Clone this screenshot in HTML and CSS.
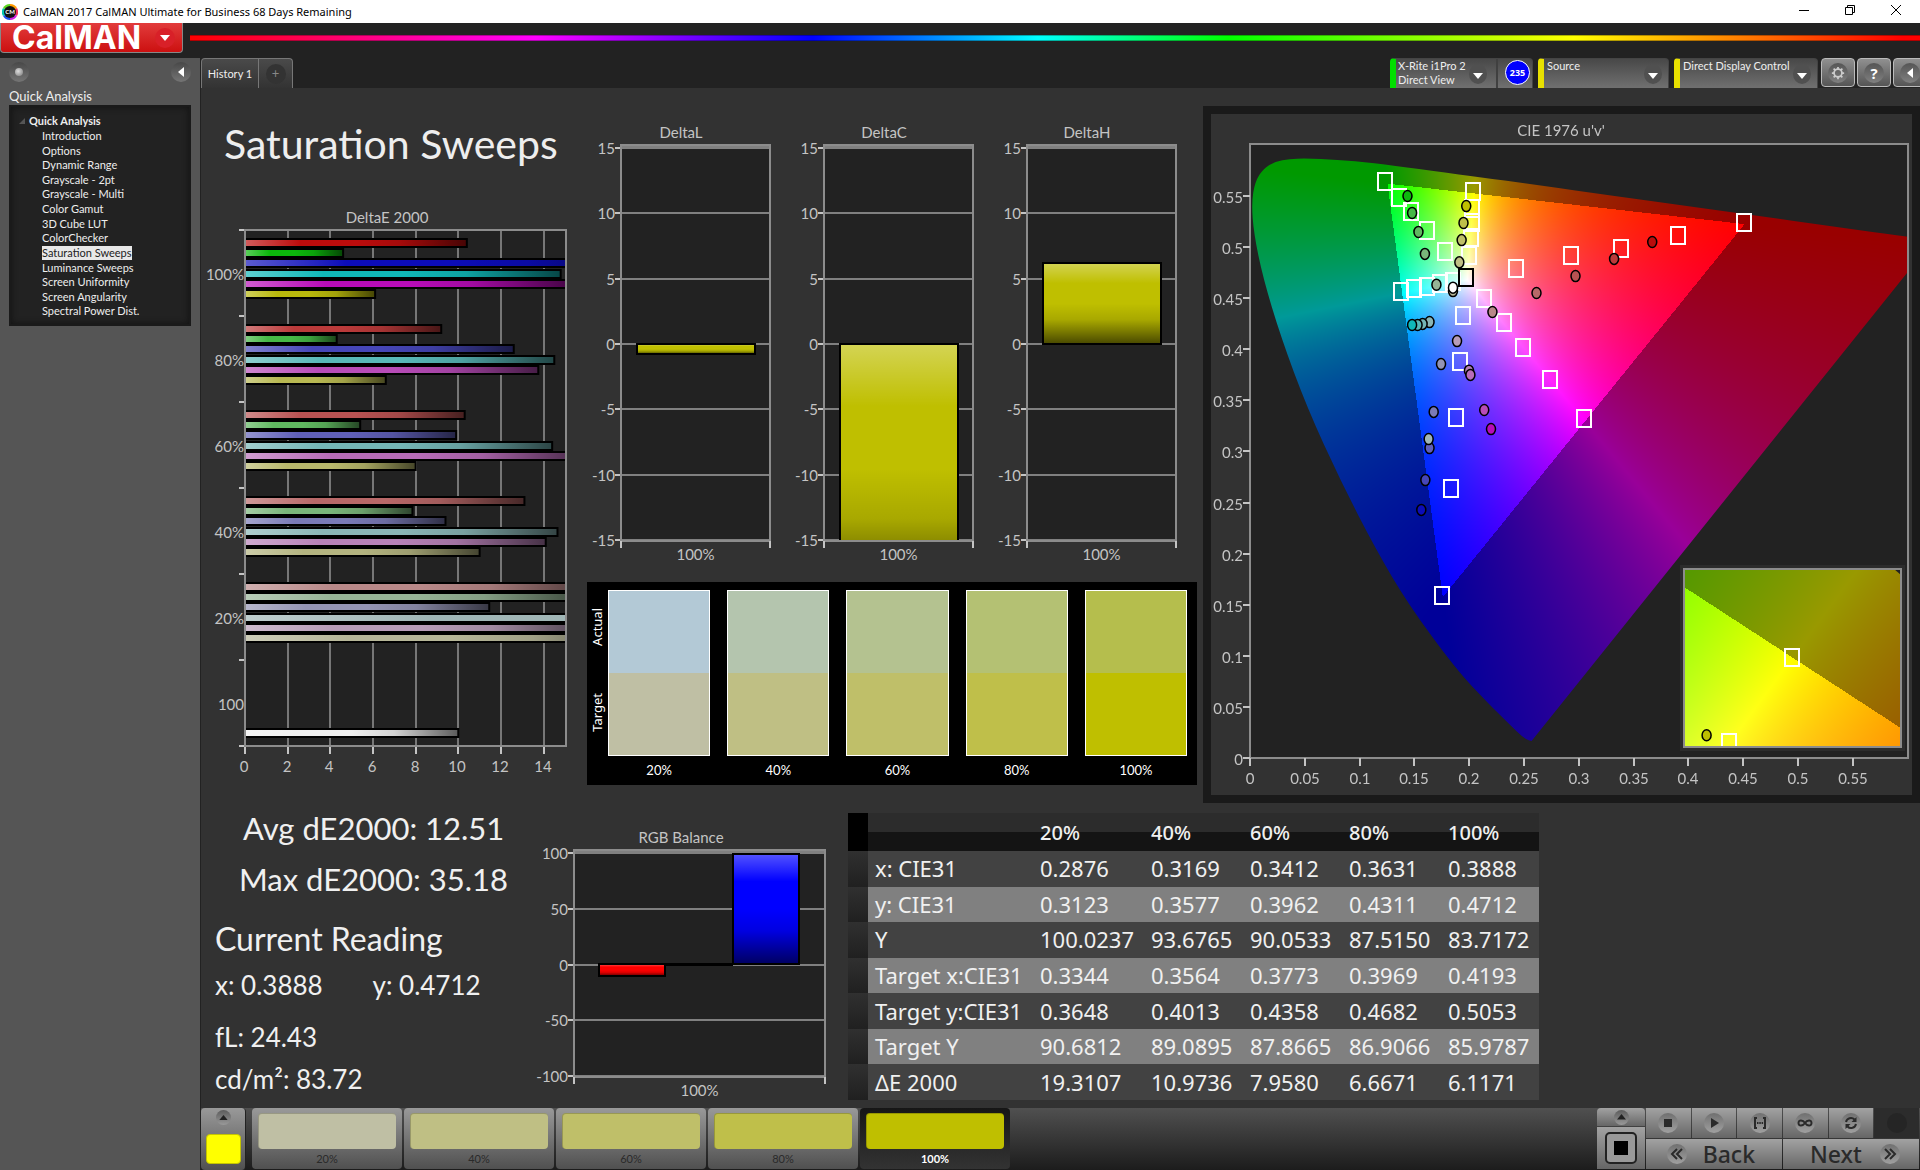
FILE: index.html
```html
<!DOCTYPE html>
<html lang="en">
<head>
<meta charset="utf-8">
<meta name="viewport" content="width=device-width, initial-scale=1">
<title>CalMAN 2017 CalMAN Ultimate for Business 68 Days Remaining</title>
<link rel="stylesheet" href="styles.css">
</head>
<body>
<header class="titlebar">
  <svg class="app-icon" viewBox="0 0 16 16" aria-hidden="true">
    <path d="M8 8V0a8 8 0 0 1 7 4z" fill="#ff9a00"/><path d="M8 8l7-4a8 8 0 0 1 0 8z" fill="#f03060"/>
    <path d="M8 8l7 4a8 8 0 0 1-7 4z" fill="#d020e0"/><path d="M8 8v8a8 8 0 0 1-7-4z" fill="#2050f0"/>
    <path d="M8 8l-7 4a8 8 0 0 1 0-8z" fill="#00c8b0"/><path d="M8 8L1 4a8 8 0 0 1 7-4z" fill="#60d820"/>
    <circle cx="8" cy="8" r="6" fill="#111"/>
    <text x="8" y="10" class="app-icon-text" text-anchor="middle">CM</text>
  </svg>
  <span class="titlebar-text">CalMAN 2017 CalMAN Ultimate for Business 68 Days Remaining</span>
  <div class="window-buttons">
    <button type="button" aria-label="Minimize"><svg viewBox="0 0 12 12"><path d="M1 6.500h10"/></svg></button>
    <button type="button" aria-label="Restore"><svg viewBox="0 0 12 12"><path d="M1.500 3.500h7v7h-7zM3.500 3.500v-2h7v7h-2"/></svg></button>
    <button type="button" aria-label="Close"><svg viewBox="0 0 12 12"><path d="M1 1l10 10M11 1L1 11"/></svg></button>
  </div>
</header>

<div class="brandbar">
  <button type="button" class="brand"><span>CalMAN</span>
    <i class="brand-drop"><svg viewBox="0 0 10 6"><path d="M0 0h10L5 6z"/></svg></i></button>
  <div class="rainbow"></div>
</div>

<div class="workspace">
  <aside class="sidebar">
    <div class="sidebar-tools">
      <button type="button" class="round" aria-label="Pin"><i class="pin-dot"></i></button>
      <button type="button" class="round" aria-label="Collapse"><svg viewBox="0 0 6 10"><path d="M6 0v10L0 5z"/></svg></button>
    </div>
    <h2>Quick Analysis</h2>
    <nav class="tree">
      <div class="tree-root"><svg viewBox="0 0 5 5"><path d="M5 0v5H0z"/></svg><span>Quick Analysis</span></div>
      <ul>
        <li><a href="#">Introduction</a></li>
        <li><a href="#">Options</a></li>
        <li><a href="#">Dynamic Range</a></li>
        <li><a href="#">Grayscale - 2pt</a></li>
        <li><a href="#">Grayscale - Multi</a></li>
        <li><a href="#">Color Gamut</a></li>
        <li><a href="#">3D Cube LUT</a></li>
        <li><a href="#">ColorChecker</a></li>
        <li><a href="#" class="current">Saturation Sweeps</a></li>
        <li><a href="#">Luminance Sweeps</a></li>
        <li><a href="#">Screen Uniformity</a></li>
        <li><a href="#">Screen Angularity</a></li>
        <li><a href="#">Spectral Power Dist.</a></li>
      </ul>
    </nav>
  </aside>

  <main class="content">
    <div class="tabstrip">
      <button type="button" class="tab">History 1</button>
      <button type="button" class="tab tab-add" aria-label="Add history"><i>+</i></button>
      <div class="devices">
        <div class="device device-meter">
          <button type="button" class="device-main"><span>X-Rite i1Pro 2<br>Direct View</span>
            <i class="drop"><svg viewBox="0 0 10 6"><path d="M0 0h10L5 6z"/></svg></i></button>
          <button type="button" class="level">235</button>
        </div>
        <button type="button" class="device device-source"><span>Source</span>
          <i class="drop"><svg viewBox="0 0 10 6"><path d="M0 0h10L5 6z"/></svg></i></button>
        <button type="button" class="device device-display"><span>Direct Display Control</span>
          <i class="drop"><svg viewBox="0 0 10 6"><path d="M0 0h10L5 6z"/></svg></i></button>
        <button type="button" class="tool" aria-label="Settings"><i><svg class="gear" viewBox="0 0 16 16"><circle cx="8" cy="8" r="4.500"/><path d="M8 1v2.500M8 12.500V15M1 8h2.500M12.500 8H15M3 3l2 2M11 11l2 2M13 3l-2 2M5 11l-2 2"/></svg></i></button>
        <button type="button" class="tool" aria-label="Help"><i>?</i></button>
        <button type="button" class="tool" aria-label="Hide"><i><svg class="left" viewBox="0 0 6 10"><path d="M6 0v10L0 5z"/></svg></i></button>
      </div>
    </div>

    <section class="upper">
      <div class="col-sweep">
        <h1>Saturation Sweeps</h1>
        <svg id="delta-e" class="chart" viewBox="0 0 385 590"></svg>
      </div>
      <div class="col-delta">
        <div class="deltas">
          <svg id="delta-l" class="chart" viewBox="0 0 203 456"></svg>
          <svg id="delta-c" class="chart" viewBox="0 0 203 456"></svg>
          <svg id="delta-h" class="chart" viewBox="0 0 203 456"></svg>
        </div>
        <div class="compare">
          <div class="compare-labels"><span>Actual</span><span>Target</span></div>
          <figure><div class="pair p20"></div><figcaption>20%</figcaption></figure>
          <figure><div class="pair p40"></div><figcaption>40%</figcaption></figure>
          <figure><div class="pair p60"></div><figcaption>60%</figcaption></figure>
          <figure><div class="pair p80"></div><figcaption>80%</figcaption></figure>
          <figure><div class="pair p100"></div><figcaption>100%</figcaption></figure>
        </div>
      </div>
      <div class="cie">
        <canvas id="cie-fill" width="701" height="681"></canvas>
        <svg id="cie-marks" class="chart" viewBox="0 0 701 681"></svg>
      </div>
    </section>

    <section class="lower">
      <div class="readings">
        <p class="stat avg">Avg dE2000: 12.51</p>
        <p class="stat max">Max dE2000: 35.18</p>
        <h3>Current Reading</h3>
        <p class="xy"><span>x: 0.3888</span><span>y: 0.4712</span></p>
        <p class="fl">fL: 24.43</p>
        <p class="cd">cd/m²: 83.72</p>
      </div>
      <svg id="rgb" class="chart" viewBox="0 0 318 305"></svg>
      <table>
        <thead><tr><th class="grip"></th><th></th><th>20%</th><th>40%</th><th>60%</th><th>80%</th><th>100%</th></tr></thead>
        <tbody>
          <tr><td class="grip"></td><th>x: CIE31</th><td>0.2876</td><td>0.3169</td><td>0.3412</td><td>0.3631</td><td>0.3888</td></tr>
          <tr><td class="grip"></td><th>y: CIE31</th><td>0.3123</td><td>0.3577</td><td>0.3962</td><td>0.4311</td><td>0.4712</td></tr>
          <tr><td class="grip"></td><th>Y</th><td>100.0237</td><td>93.6765</td><td>90.0533</td><td>87.5150</td><td>83.7172</td></tr>
          <tr><td class="grip"></td><th>Target x:CIE31</th><td>0.3344</td><td>0.3564</td><td>0.3773</td><td>0.3969</td><td>0.4193</td></tr>
          <tr><td class="grip"></td><th>Target y:CIE31</th><td>0.3648</td><td>0.4013</td><td>0.4358</td><td>0.4682</td><td>0.5053</td></tr>
          <tr><td class="grip"></td><th>Target Y</th><td>90.6812</td><td>89.0895</td><td>87.8665</td><td>86.9066</td><td>85.9787</td></tr>
          <tr><td class="grip"></td><th>ΔE 2000</th><td>19.3107</td><td>10.9736</td><td>7.9580</td><td>6.6671</td><td>6.1171</td></tr>
        </tbody>
      </table>
    </section>

    <footer class="bottombar">
      <button type="button" class="picker" aria-label="Color"><i><svg viewBox="0 0 10 6"><path d="M5 0l5 6H0z"/></svg></i><b></b></button>
      <div class="steps">
        <button type="button" class="s20"><b></b>20%</button>
        <button type="button" class="s40"><b></b>40%</button>
        <button type="button" class="s60"><b></b>60%</button>
        <button type="button" class="s80"><b></b>80%</button>
        <button type="button" class="s100 selected"><b></b>100%</button>
      </div>
      <div class="transport">
        <div class="stopcol">
          <button type="button" class="up" aria-label="Expand"><i><svg viewBox="0 0 10 6"><path d="M5 0l5 6H0z"/></svg></i></button>
          <button type="button" class="bigstop" aria-label="Stop"><b></b></button>
        </div>
        <div class="keys">
          <button type="button" aria-label="Stop"><i><svg viewBox="0 0 16 16"><path d="M4 4h8v8H4z"/></svg></i></button>
          <button type="button" aria-label="Play"><i><svg viewBox="0 0 16 16"><path d="M5 3l8 5-8 5z"/></svg></i></button>
          <button type="button" aria-label="Read series"><i><svg viewBox="0 0 16 16"><path class="line" d="M5 3H3v10h2M11 3h2v10h-2"/><path d="M5 7h1.500v2H5zM7.300 7h1.500v2H7.300zM9.600 7h1.500v2H9.600z"/></svg></i></button>
          <button type="button" aria-label="Continuous"><i><svg viewBox="0 0 16 16"><path class="line" d="M8 8C6 5 1.500 4.500 1.500 8S6 11 8 8s6.500-3.500 6.500 0S10 11 8 8z"/></svg></i></button>
          <button type="button" aria-label="Repeat"><i><svg viewBox="0 0 16 16"><path class="line" d="M3 7a5 5 0 0 1 8.500-2.500M13 9a5 5 0 0 1-8.500 2.500"/><path d="M13.500 2v5h-5zM2.500 14V9h5z"/></svg></i></button>
          <button type="button" class="off" aria-label="Record" disabled><i></i></button>
          <button type="button" class="wide back"><i><svg viewBox="0 0 16 16"><path class="line" d="M8 3L3 8l5 5M13 3L8 8l5 5"/></svg></i><span>Back</span></button>
          <button type="button" class="wide next"><span>Next</span><i><svg viewBox="0 0 16 16"><path class="line" d="M3 3l5 5-5 5M8 3l5 5-5 5"/></svg></i></button>
        </div>
      </div>
    </footer>
  </main>
</div>
<script src="charts.js"></script>
</body>
</html>
```
FILE: styles.css
```css
:root {
  --ui: Lato, "Open Sans", sans-serif;
  --data: "Noto Sans", "Open Sans", sans-serif;
}
* { box-sizing: border-box; }
body { margin: 0; min-height: 100vh; display: flex; flex-direction: column; background: #222; color: #eee; font: 12px/15px var(--ui); }
button { font: inherit; color: inherit; border: 0; padding: 0; background: none; }
h1, h2, h3, p, ul, figure { margin: 0; padding: 0; font-weight: 400; }
i, b { font-style: normal; display: block; }
svg { display: block; }

.titlebar { height: 23px; background: #fff; color: #000; display: flex; align-items: center; padding-left: 2px; font: 11px/16px "Noto Sans", sans-serif; }
.app-icon { width: 16px; height: 16px; margin-right: 5px; }
.app-icon-text { font: bold 6px Lato, sans-serif; fill: #fff; }
.window-buttons { margin-left: auto; display: flex; }
.window-buttons button { width: 46px; height: 23px; display: grid; place-items: center; padding: 0 3px 3px 0; }
.window-buttons svg { width: 12px; height: 12px; fill: none; stroke: #000; }

.brandbar { height: 35px; display: flex; align-items: flex-start; gap: 7px; }
.brand { width: 183px; height: 30px; display: flex; align-items: center; justify-content: space-between; padding: 0 7px 0 11px; background: linear-gradient(#e23c3c, #cc1010); border: 1px solid #888; border-top: 0; border-radius: 0 0 4px 4px; font: bold 32px/29px Inter, sans-serif; color: #fff; }
.brand-drop { width: 20px; height: 20px; border-radius: 50%; background: #d82028; display: grid; place-items: center; }
.brand-drop svg { width: 10px; fill: #fff; }
.rainbow { flex: 1; height: 6px; margin-top: 12px; border: solid rgba(0,0,0,.3); border-width: 1px 0; background: linear-gradient(90deg, #f00, #f0f 20%, #00f 36%, #0ff 49%, #0f0 60%, #6f0 68%, #ff0 80%, #f00 99%); }

.workspace { flex: 1; display: flex; }
.sidebar { width: 200px; background: #555; padding: 4px 9px; }
.sidebar-tools { display: flex; justify-content: space-between; height: 20px; }
.round { width: 20px; height: 20px; border-radius: 50%; background: linear-gradient(#484848, #757575); display: grid; place-items: center; }
.round svg { width: 6px; height: 10px; fill: #fff; }
.pin-dot { width: 8px; height: 8px; border-radius: 50%; background: radial-gradient(at 40% 40%, #ddd, #777); }
.sidebar h2 { font-size: 13px; line-height: 16px; margin: 6px 0 1px; }
.tree { height: 221px; background: #222; border: 2px solid #1a1a1a; box-shadow: inset 0 0 6px #111; padding: 5px 0 0 8px; font-size: 11px; }
.tree-root { display: flex; align-items: center; gap: 4px; font-weight: 700; height: 17px; }
.tree-root svg { width: 6px; height: 6px; fill: #555; }
.tree ul { list-style: none; display: grid; grid-auto-rows: 1fr; height: 190px; padding-left: 23px; line-height: 14px; }
.tree a { color: #eee; text-decoration: none; display: block; width: max-content; }
.tree .current { background: #e8e8e8; color: #222; }

.content { flex: 1; min-width: 0; background: #323232; display: flex; flex-direction: column; border-left: 1px solid #222; }
.tabstrip { height: 30px; background: #222; display: flex; }
.tab { height: 30px; width: 58px; background: linear-gradient(#4a4a4a, #333); border: 1px solid #777; border-bottom: 0; border-radius: 4px 0 0 0; font-size: 11px; }
.tab-add { width: 34px; border-radius: 0 4px 0 0; border-left: 0; display: grid; place-items: center; }
.tab-add i { width: 20px; height: 20px; border-radius: 50%; background: #333; color: #888; line-height: 19px; font-size: 13px; }
.devices { margin-left: auto; display: flex; gap: 2px; width: 530px; overflow: hidden; }
.device { flex: none; height: 30px; margin-right: 3px; border: 1px solid #444; border-bottom: 0; border-radius: 4px 4px 0 0; background: linear-gradient(#484848, #707070); display: flex; justify-content: space-between; text-align: left; font-size: 11px; line-height: 14px; }
.device span { align-self: flex-start; }
.device-meter { width: 143px; border-left: 6px solid #00e000; }
.device-main { width: 102px; padding: 0 9px 0 2px; display: flex; justify-content: space-between; text-align: left; border-right: 2px solid #404040; }
.device-source { width: 131px; border-left: 6px solid #e8e000; padding: 0 6px 0 3px; }
.device-display { width: 144px; border-left: 6px solid #e8e000; padding: 0 6px 0 3px; margin-right: 1px; }
.drop { width: 18px; height: 20px; margin-top: 5px; border-radius: 50%; background: #505050; display: grid; place-items: center; flex: none; }
.drop svg { width: 10px; fill: #fff; margin-top: 3px; }
.level { width: 25px; height: 25px; margin: 1px 2px 0 0; border: 1px solid #fff; border-radius: 50%; background: #00f; color: #fff; font: bold 9px/20px "Open Sans", sans-serif; text-align: center; }
.tool { width: 34px; height: 29px; flex: none; border: 1px solid #bbb; border-radius: 4px; background: linear-gradient(#909090, #555); display: grid; place-items: center; }
.tool i { width: 20px; height: 20px; border-radius: 50%; background: linear-gradient(#555, #808080); display: grid; place-items: center; font: bold 15px/20px "Open Sans", sans-serif; color: #fff; }
.tool .gear { width: 14px; fill: none; stroke: #ccc; stroke-width: 2; }
.tool .left { width: 6px; fill: #fff; }

.upper { display: grid; grid-template-columns: minmax(0, 385fr) minmax(0, 617fr) minmax(0, 717fr); padding-top: 18px; }
.col-sweep h1 { font: 41px/60px var(--ui); padding: 8px 0 0 23px; height: 104px; white-space: nowrap; }
.chart { width: 100%; height: auto; }
.chart text { font: 15px var(--ui); fill: #c4c4c4; }
.col-delta { padding: 14px 6px 0 0; }
.deltas { display: grid; grid-template-columns: repeat(3, minmax(0, 1fr)); padding-right: 2px; }
.compare { margin: 6px 0 0 1px; height: 203px; background: #000; display: flex; gap: 17px; padding: 8px 10px 0 2px; color: #fff; }
.compare-labels { width: 15px; height: 166px; margin-right: -13px; padding-bottom: 6px; display: flex; flex-direction: column; justify-content: space-around; align-items: center; font: 13px/18px "Noto Sans", sans-serif; }
.compare-labels span { writing-mode: vertical-rl; rotate: 180deg; }
.compare-labels span + span { padding-top: 6px; margin-top: 12px; padding-top: 0; }
.compare figure { flex: 1; text-align: center; }
.compare figcaption { padding-top: 5px; font-size: 13px; line-height: 18px; }
.pair { height: 166px; border: 1px solid #fff; }
.p20 { background: linear-gradient(#b3c9d6 50%, #bfbfa4 50%); }
.p40 { background: linear-gradient(#b4c5ae 50%, #bfbf84 50%); }
.p60 { background: linear-gradient(#b4c290 50%, #bfbf69 50%); }
.p80 { background: linear-gradient(#b4c173 50%, #bfbf4a 50%); }
.p100 { background: linear-gradient(#b5be4d 50%, #bfbf00 50%); }
.cie { border: 8px solid #1a1a1a; display: grid; align-self: start; }
.cie > * { grid-area: 1 / 1; width: 100%; height: auto; }

.lower { display: grid; grid-template-columns: minmax(0, 329fr) minmax(0, 318fr) minmax(0, 691fr) minmax(0, 381fr); align-items: start; }
.readings { color: #f0f0f0; white-space: nowrap; padding-left: 14px; }
.readings .stat { font-size: 31px; line-height: 51px; }
.readings .avg { padding-left: 28px; }
.readings .max { padding-left: 24px; }
.readings h3 { font-size: 32px; line-height: 54px; padding-top: 7px; }
.readings p { font-size: 26px; line-height: 38px; }
.xy { display: flex; }
.xy span { width: 162px; }
.readings .fl { padding-top: 14px; }
.readings .cd { padding-top: 4px; }

table { width: 100%; height: 287px; margin-top: 10px; border-collapse: collapse; table-layout: fixed; font: 22px/35px var(--data); color: #f0f0f0; }
th, td { padding: 0; text-align: left; font-weight: 400; white-space: nowrap; }
thead th { height: 38px; font-size: 20px; font-weight: 500; background: linear-gradient(#2c2c2c 50%, #141414 50%); width: 99px; }
thead th:nth-child(2) { width: 172px; }
thead th:nth-child(3) { width: 111px; }
thead th:last-child { width: 91px; }
thead .grip { width: 20px; background: #000; }
tbody tr { background: #424242; }
tbody tr:nth-child(even) { background: #808080; }
tbody .grip { background: linear-gradient(#303030, #202020); }
tbody th { padding-left: 7px; }

.bottombar { margin-top: auto; height: 62px; display: flex; background: linear-gradient(#505050, #1c1c1c); }
.picker { width: 45px; border-right: 1px solid #222; border-radius: 4px; background: linear-gradient(#999, #505050); display: flex; flex-direction: column; align-items: center; justify-content: space-between; padding: 2px 0 6px; }
.picker i, .up i { width: 15px; height: 15px; border-radius: 50%; background: linear-gradient(#5c5c5c, #999); display: grid; place-items: center; }
.picker i svg, .up svg { width: 9px; fill: #222; }
.picker b { width: 35px; height: 30px; border: 1px solid #c4c400; border-radius: 4px; background: #ff0; }
.steps { display: flex; gap: 2px; margin-left: 6px; }
.steps button { width: 150px; height: 61px; padding: 5px 6px 0; border-radius: 4px; background: linear-gradient(#999, #505050); color: #2a2a2a; font: 11px/20px var(--ui); }
.steps b { height: 36px; border-radius: 4px; border: 1px solid rgba(0,0,0,.2); border-width: 1px 0 0 1px; }
.s20 b { background: #bfbfa4; }
.s40 b { background: #bfbf84; }
.s60 b { background: #bfbf69; }
.s80 b { background: #bfbf4a; }
.s100 b { background: #bfbf00; }
.steps .selected { background: linear-gradient(#161616, #333); color: #fff; font-weight: 700; }
.transport { margin-left: auto; display: flex; gap: 1px; padding-right: 1px; height: 61px; color: #2a2a2a; }
.stopcol { width: 48px; display: grid; grid-template-rows: 18px 1fr; gap: 1px; }
.stopcol button, .keys button { background: linear-gradient(#a2a2a2, #666); display: grid; place-items: center; }
.up { border-radius: 4px 4px 0 0; }
.bigstop b { width: 32px; height: 32px; border: 2px solid #222; border-radius: 5px; background: linear-gradient(#000, #000) center / 14px 14px no-repeat, #999; }
.keys { display: grid; grid-template-columns: repeat(6, 1fr); gap: 1px; grid-template-rows: 30px 30px; width: 273px; }
.keys i { width: 20px; height: 20px; border-radius: 50%; background: linear-gradient(#707070, #a0a0a0); display: grid; place-items: center; }
.keys svg { width: 16px; fill: #2a2a2a; }
.keys .line { fill: none; stroke: #2a2a2a; stroke-width: 2; }
.keys .off { background: #2c2c2c; }
.keys .off i { background: #252525; }
.keys .wide { grid-column: span 3; display: flex; align-items: center; justify-content: space-between; font: 500 23px/30px var(--data); }
.keys .back { padding: 0 27px 0 21px; }
.keys .next { padding: 0 19px 0 27px; }
```
FILE: charts.js
```js
const NS = 'http://www.w3.org/2000/svg';
const FRAME = '#8c8c8c', PLOT = '#222';

function add(parent, tag, attrs, text) {
  const el = document.createElementNS(NS, tag);
  for (const k in attrs) el.setAttribute(k, attrs[k]);
  if (text !== undefined) el.textContent = text;
  parent.appendChild(el);
  return el;
}
const label = (svg, x, y, s, anchor) => add(svg, 'text', { x, y, 'text-anchor': anchor || 'middle' }, s);
const hline = (svg, x1, x2, y, c, w) => add(svg, 'rect', { x: x1, y: y - 1, width: x2 - x1, height: w || 2, fill: c });
const vline = (svg, x, y1, y2, c, w) => add(svg, 'rect', { x: x - 1, y: y1, width: w || 2, height: y2 - y1, fill: c });

function gloss(svg, id, vertical) {
  const g = add(svg, 'linearGradient', vertical ? { id, x2: 0, y2: 1 } : { id });
  [[0, '#fff', .33], [.25, '#fff', 0], [.5, '#000', 0], [.7, '#000', .12], [1, '#000', .62]]
    .forEach(([o, c, a]) => add(g, 'stop', { offset: o, 'stop-color': c, 'stop-opacity': a }));
}
function bar(parent, id, x, y, width, height, fill) {
  add(parent, 'rect', { x, y, width, height, fill });
  add(parent, 'rect', { x, y, width, height, fill: `url(#${id})`, stroke: '#000', 'stroke-width': 2 });
}

/* Horizontal DeltaE 2000 bars, six colors for each saturation level */
(function () {
  const svg = document.getElementById('delta-e');
  const L = 44, R = 365, T = 20, B = 536, unit = 21.33;
  const colors = [
    ['#bb0c0c', '#0cb80c', '#0c0cb8', '#10b8b8', '#b80cb8', '#b8b80c'],
    ['#bb3a3a', '#46b846', '#4646b8', '#58b8b8', '#b84cb8', '#b8b852'],
    ['#b85252', '#60b860', '#6060b8', '#74b6b6', '#b86cb8', '#b8b86c'],
    ['#b86868', '#7ab67a', '#7a7ab6', '#8ab6b6', '#b882b8', '#b4b480'],
    ['#b88888', '#96b496', '#9494b4', '#a0b6b6', '#b89cb8', '#b6b698']];
  const values = [
    [10.4, 4.6, 19, 14.8, 15.2, 6.1],
    [9.2, 4.3, 12.6, 14.5, 13.75, 6.6],
    [10.3, 5.4, 9.9, 14.4, 15.9, 8],
    [13.1, 7.85, 9.4, 14.65, 14.1, 11],
    [16.5, 16, 11.45, 35, 16.5, 19.3]];
  gloss(svg, 'gloss-h', false);
  const clip = add(svg, 'clipPath', { id: 'plot-e' });
  add(clip, 'rect', { x: L, y: T, width: R - L, height: B - T });
  add(svg, 'rect', { x: L, y: T, width: R - L, height: B - T, fill: PLOT });
  label(svg, 186, 13, 'DeltaE 2000');
  for (let v = 0; v <= 14; v += 2) {
    const x = Math.round(L + v * unit);
    vline(svg, x, T, B, '#777');
    vline(svg, x, B, B + 8, '#c4c4c4');
    label(svg, x - 1, B + 26, v);
  }
  const g = add(svg, 'g', { 'clip-path': 'url(#plot-e)' });
  values.forEach((row, i) => row.forEach((v, j) =>
    bar(g, 'gloss-h', L, Math.round(29 + i * 86 + j * 10.2), v * unit, 8, colors[i][j])));
  bar(g, 'gloss-h', L, 519, 10 * unit, 8, '#efefef');
  for (let i = 0; i <= 6; i++) hline(svg, L - 6, L, T + i * 86, '#c4c4c4');
  ['100%', '80%', '60%', '40%', '20%', '100'].forEach((s, i) => label(svg, L - 1, 70 + i * 86, s, 'end'));
  add(svg, 'rect', { x: L, y: T, width: R - L, height: B - T, fill: 'none', stroke: FRAME, 'stroke-width': 2 });
})();

/* Vertical charts with a symmetrical axis */
function column(id, o) {
  const svg = document.getElementById(id);
  const { L, R, T, B } = o;
  gloss(svg, id + '-gloss', true);
  const clip = add(svg, 'clipPath', { id: id + '-plot' });
  add(clip, 'rect', { x: L, y: T, width: R - L, height: B - T });
  add(svg, 'rect', { x: L, y: T, width: R - L, height: B - T, fill: PLOT });
  label(svg, o.titleX, T - 7, o.title);
  o.ticks.forEach((v, i) => {
    const y = Math.round(T + 3 + i * (B - T - 4) / (o.ticks.length - 1));
    hline(svg, L, R, y, '#808080', 2);
    hline(svg, L - 6, L, y, '#c4c4c4', 2);
    label(svg, L - 6, y + 6, v, 'end');
  });
  hline(svg, L, R, T + 1, '#808080', 4);
  const g = add(svg, 'g', { 'clip-path': `url(#${id}-plot)` });
  o.bars.forEach(b => bar(g, id + '-gloss', b[0], b[1], b[2], b[3], b[4]));
  add(svg, 'rect', { x: L, y: T, width: R - L, height: B - T, fill: 'none', stroke: FRAME, 'stroke-width': 2 });
  vline(svg, L, B, B + 7, '#c4c4c4');
  vline(svg, R, B, B + 7, '#c4c4c4');
  label(svg, (L + R) / 2, B + 19, '100%');
}
const delta = { L: 35, R: 184, T: 25, B: 421, titleX: 95, ticks: [15, 10, 5, 0, -5, -10, -15] };
column('delta-l', { ...delta, title: 'DeltaL', bars: [[51, 224, 118, 10, '#bfbf00']] });
column('delta-c', { ...delta, title: 'DeltaC', bars: [[51, 224, 118, 250, '#bfbf00']] });
column('delta-h', { ...delta, title: 'DeltaH', bars: [[51, 143, 118, 81, '#bfbf00']] });
column('rgb', { L: 44, R: 295, T: 47, B: 274, titleX: 151, title: 'RGB Balance', ticks: [100, 50, 0, -50, -100],
  bars: [[69, 161, 66, 12, '#f00'], [135, 161, 67, 1, '#000'], [203, 51, 66, 110, '#00f']] });

/* CIE 1976 chart: u'v' plane, with a zoomed xy inset around the selected target */
const P = { L: 39, R: 697, T: 30, B: 644, sx: 1096, sy: 1022 };
const I = { L: 473, R: 690, T: 455, B: 633, cx: 581, cy: 543, x: .4193, y: .5053, sx: 2800, sy: 2295 };
const LOCUS = [[.2569, .0166], [.2522, .0169], [.2347, .035], [.2161, .0549], [.1877, .0871], [.1441, .151], [.1147, .2044],
  [.0828, .2708], [.0521, .3427], [.0282, .4117], [.0119, .4698], [.0035, .5131], [.0014, .5432], [.0046, .5638],
  [.0123, .577], [.0231, .5837], [.036, .5861], [.0501, .5868], [.0792, .5856], [.1127, .5821], [.1531, .5766],
  [.2026, .5694], [.2623, .5605], [.3315, .5501], [.4035, .5393], [.4692, .5296], [.5203, .5219], [.583, .5125], [.6234, .5065]];

function shade(x, y) {
  const X = x / y, Z = (1 - x - y) / y;
  const rgb = [3.2406 * X - 1.5372 - .4986 * Z, -.9689 * X + 1.8758 + .0415 * Z, .0557 * X - .204 + 1.057 * Z];
  const dim = Math.min(...rgb) < 0 ? .6 : 1;
  const top = Math.max(...rgb);
  return rgb.map(c => Math.round(255 * dim * Math.max(c, 0) / top));
}
(function () {
  const ctx = document.getElementById('cie-fill').getContext('2d');
  const layer = document.createElement('canvas');
  layer.width = 701; layer.height = 681;
  const lc = layer.getContext('2d');
  const paint = (L, R, T, B, toXY) => {
    const img = lc.createImageData(R - L, B - T);
    for (let j = 0, k = 0; j < B - T; j++) for (let i = 0; i < R - L; i++, k += 4) {
      const [x, y] = toXY(L + i, T + j);
      const c = shade(x, Math.max(y, .0001));
      img.data[k] = c[0]; img.data[k + 1] = c[1]; img.data[k + 2] = c[2]; img.data[k + 3] = 255;
    }
    lc.putImageData(img, L, T);
  };
  ctx.fillStyle = '#323232'; ctx.fillRect(0, 0, 701, 681);
  ctx.fillStyle = PLOT; ctx.fillRect(P.L, P.T, P.R - P.L, P.B - P.T);

  paint(P.L, P.R, P.T, P.B, (px, py) => {
    const u = (px - P.L) / P.sx, v = (P.B - py) / P.sy, d = 6 * u - 16 * v + 12;
    return [9 * u / d, 4 * v / d];
  });
  ctx.save();
  ctx.beginPath(); ctx.rect(P.L, P.T, P.R - P.L, P.B - P.T); ctx.clip();
  ctx.beginPath();
  const pts = LOCUS.map(([u, v]) => [P.L + u * P.sx, P.B - v * P.sy]);
  ctx.moveTo(...pts[0]);
  for (let i = 1; i < pts.length - 1; i++) {
    const a = pts[i], b = pts[i + 1];
    ctx.quadraticCurveTo(a[0], a[1], (a[0] + b[0]) / 2, (a[1] + b[1]) / 2);
  }
  ctx.lineTo(...pts[pts.length - 1]);
  ctx.closePath(); ctx.clip();
  ctx.drawImage(layer, 0, 0);
  ctx.restore();

  ctx.fillStyle = '#2c2c2c'; ctx.fillRect(I.L - 4, I.T - 4, I.R - I.L + 8, I.B - I.T + 8);
  ctx.fillStyle = PLOT; ctx.fillRect(I.L, I.T, I.R - I.L, I.B - I.T);
  paint(I.L, I.R, I.T, I.B, (px, py) => [I.x + (px - I.cx) / I.sx, I.y - (py - I.cy) / I.sy]);
  ctx.save();
  ctx.beginPath();
  ctx.moveTo(I.L, I.T); ctx.lineTo(I.R - 7, I.T); ctx.lineTo(I.R, I.T + 6); ctx.lineTo(I.R, I.B); ctx.lineTo(I.L, I.B);
  ctx.clip();
  ctx.drawImage(layer, 0, 0);
  ctx.restore();

  const svg = document.getElementById('cie-marks');
  label(svg, 350, 22, "CIE 1976 u'v'");
  add(svg, 'rect', { x: P.L, y: P.T, width: P.R - P.L, height: P.B - P.T, fill: 'none', stroke: FRAME, 'stroke-width': 2 });
  for (let i = 0; i < 12; i++) {
    const t = +(i * .05).toFixed(2), x = Math.round(P.L + t * P.sx), y = Math.round(P.B - t * P.sy);
    vline(svg, x, P.B, P.B + 8, '#c4c4c4');
    hline(svg, P.L - 7, P.L, y, '#c4c4c4');
    label(svg, x, P.B + 26, t);
    label(svg, P.L - 7, y + 7, t, 'end');
  }
  const box = (g, x, y, c) => add(g, 'rect', { x: Math.round(x) - 7, y: Math.round(y) - 8, width: 14, height: 17, fill: 'none', stroke: c, 'stroke-width': 2 });
  const dot = (g, x, y, c) => add(g, 'ellipse', { cx: x, cy: y, rx: 4.5, ry: 5.5, fill: c, stroke: '#000', 'stroke-width': 1.5 });
  [[.1236, .5646], [.1357, .5492], [.147, .5349], [.1613, .5163], [.1776, .4964],
    [.2039, .5545], [.2029, .5385], [.2025, .5247], [.2017, .5095], [.1996, .4918],
    [.4503, .5248], [.3904, .5114], [.3389, .4993], [.2933, .4918], [.243, .4798],
    [.1378, .4566], [.15, .4602], [.1617, .4615], [.1734, .4651], [.1852, .4664],
    [.2137, .4501], [.2317, .4266], [.2493, .4018], [.274, .3705], [.3046, .3323],
    [.1944, .4335], [.1919, .3885], [.1881, .3337], [.1831, .2639], [.1755, .1592]]
    .forEach(([u, v]) => box(svg, P.L + u * P.sx, P.B - v * P.sy, '#fff'));
  box(svg, P.L + .1969 * P.sx, P.B - .4703 * P.sy, '#000');
  [[.1701, .4631, '#96b496'], [.1596, .4932, '#7ab67a'], [.1537, .5147, '#60b860'], [.1479, .5333, '#46b846'], [.1437, .5499, '#0cb80c'],
    [.1852, .4569, '#b6b698'], [.191, .485, '#bfbf84'], [.1931, .5068, '#bfbf69'], [.1948, .5235, '#bfbf4a'], [.1973, .5401, '#bfbf00'],
    [.2212, .4364, '#b88888'], [.2614, .455, '#b86868'], [.297, .4716, '#b85252'], [.3322, .4883, '#bb3a3a'], [.367, .5049, '#bb0c0c'],
    [.1638, .4266, '#8ab6b6'], [.1575, .4247, '#74b6b6'], [.1529, .4237, '#58b8b8'], [.1479, .4237, '#10b8b8'],
    [.1889, .408, '#b89cb8'], [.1998, .379, '#b882b8'], [.2011, .3748, '#b86cb8'], [.2137, .3405, '#b84cb8'], [.2199, .3219, '#b80cb8'],
    [.1743, .3855, '#9494b4'], [.1676, .3386, '#7a7ab6'], [.1638, .3033, '#6060b8'], [.163, .3121, '#a0b6b6'], [.16, .272, '#4646b8'], [.1563, .2427, '#0c0cb8'],
    [.1852, .4602, '#fff']]
    .forEach(([u, v, c]) => dot(svg, P.L + u * P.sx, P.B - v * P.sy, c));

  const clip = add(svg, 'clipPath', { id: 'inset' });
  add(clip, 'rect', { x: I.L, y: I.T, width: I.R - I.L, height: I.B - I.T });
  const g = add(svg, 'g', { 'clip-path': 'url(#inset)' });
  box(g, I.cx, I.cy, '#fff');
  box(g, I.cx + (.3969 - I.x) * I.sx, I.cy - (.4682 - I.y) * I.sy, '#fff');
  dot(g, I.cx + (.3888 - I.x) * I.sx, I.cy - (.4712 - I.y) * I.sy, '#bfbf00');
  add(svg, 'rect', { x: I.L, y: I.T, width: I.R - I.L, height: I.B - I.T, fill: 'none', stroke: FRAME, 'stroke-width': 2 });
})();
```
